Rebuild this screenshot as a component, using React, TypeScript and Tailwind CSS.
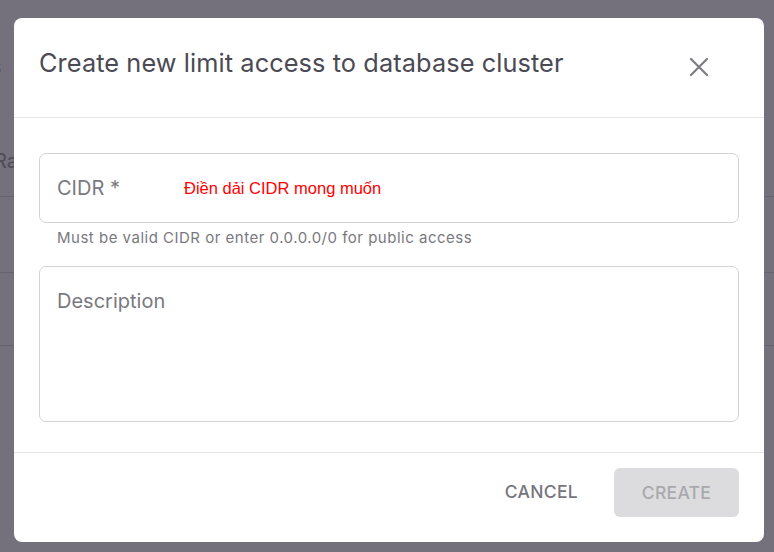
import React from "react";

export default function App() {
  return (
    <div className="relative w-[774px] h-[552px] overflow-hidden bg-[#74717c] font-['Inter',sans-serif]">
      {/* background page hint */}
      <div className="absolute left-0 top-0 w-full h-full">
        <div className="absolute left-[-10px] top-[50px] text-[22px] text-[#4e4c55]">s</div>
        <div className="absolute left-[-6px] top-[146px] text-[20px] text-[#4e4c55]">Ra</div>
        <div className="absolute left-0 top-[196px] w-full h-px bg-[#66636e]" />
        <div className="absolute left-0 top-[272px] w-full h-px bg-[#66636e]" />
        <div className="absolute left-0 top-[345px] w-full h-px bg-[#66636e]" />
      </div>

      <div className="absolute left-[14px] top-[18px] w-[750px] h-[524px] bg-white rounded-[8px] flex flex-col">
        <div className="h-[100px] border-b border-[#e6e6e8] flex items-start justify-between pl-[25px] pr-[55px] pt-[31px]">
          <h2 className="text-[25.3px] leading-[28px] text-[#4b4a54] tracking-[0.1px] font-normal">
            Create new limit access to database cluster
          </h2>
          <svg width="20" height="20" viewBox="0 0 20 20" className="mt-[8px]">
            <path d="M2 2 L18 18 M18 2 L2 18" stroke="#7d7c83" strokeWidth="2.2" strokeLinecap="round" />
          </svg>
        </div>

        <div className="flex-1 px-[25px] pt-[35px] flex flex-col">
          <div className="h-[70px] border border-[#d3d3d7] rounded-[7px] flex items-center pl-[17px]">
            <span className="text-[20px] text-[#7a7980] w-[127px]">CIDR *</span>
            <span className="text-[16.5px] text-[#ff0000] font-['Liberation_Sans',sans-serif]">Điền dải CIDR mong muốn</span>
          </div>
          <div className="pl-[18px] pt-[6px] text-[15px] leading-[18px] text-[#7a7980] tracking-[0.5px]">
            Must be valid CIDR or enter 0.0.0.0/0 for public access
          </div>
          <div className="mt-[19px] h-[156px] border border-[#d3d3d7] rounded-[7px] pl-[17px] pt-[19px]">
            <span className="text-[20px] text-[#7a7980]">Description</span>
          </div>
        </div>

        <div className="h-[90px] border-t border-[#e6e6e8] flex items-start justify-end pr-[25px] pt-[15px] gap-[36px]">
          <span className="mt-[13px] text-[17.5px] leading-[22px] font-medium text-[#76757d] tracking-[0.3px]">CANCEL</span>
          <div className="w-[125px] h-[49px] rounded-[6px] bg-[#dcdcde] flex items-center justify-center">
            <span className="text-[17.5px] leading-[22px] font-medium text-[#a9a8ae] tracking-[0.3px]">CREATE</span>
          </div>
        </div>
      </div>
    </div>
  );
}
